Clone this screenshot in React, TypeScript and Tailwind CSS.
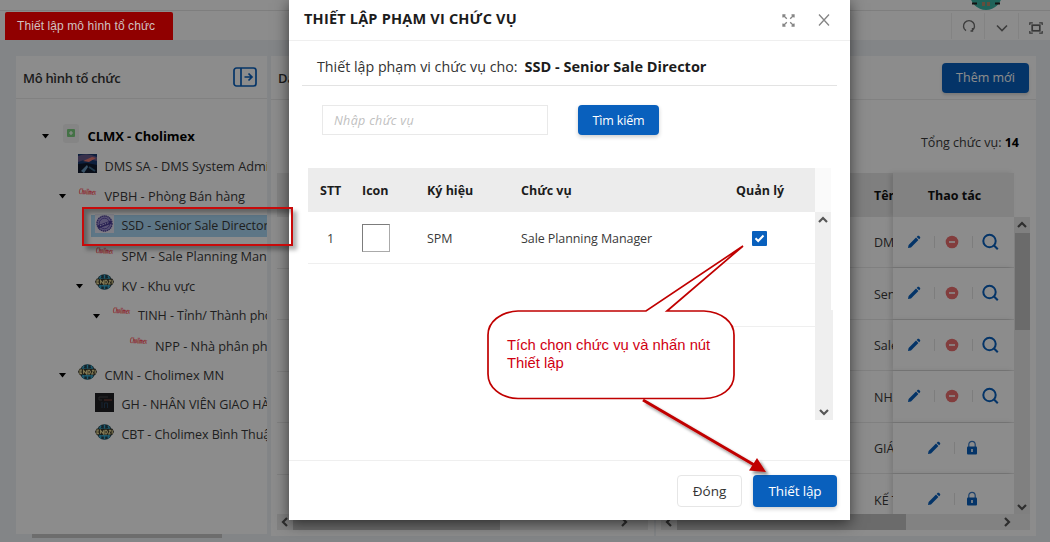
import type { ReactNode } from "react";

type Logo = "plus" | "photo" | "brand" | "stamp" | "globe" | "dark";
type TreeNode = { label: string; indent: string; logo: Logo; open?: boolean; selected?: boolean; text: string };

const regular = "text-[12.750px] tracking-[-0.020px] text-[#3a3a3a]";
const tight = "text-[12.500px] tracking-[-0.060px] text-[#3a3a3a]";

const tree: TreeNode[] = [
  { label: "CLMX - Cholimex", indent: "pl-[22px]", logo: "plus", open: true, text: "font-bold text-[13px] tracking-[-0.080px] text-black" },
  { label: "DMS SA - DMS System Admin", indent: "pl-[39px]", logo: "photo", text: regular },
  { label: "VPBH - Phòng Bán hàng", indent: "pl-[39px]", logo: "brand", open: true, text: regular },
  { label: "SSD - Senior Sale Director", indent: "pl-[56px]", logo: "stamp", selected: true, text: tight },
  { label: "SPM - Sale Planning Manager", indent: "pl-[56px]", logo: "brand", text: regular },
  { label: "KV - Khu vực", indent: "pl-[56px]", logo: "globe", open: true, text: regular },
  { label: "TINH - Tỉnh/ Thành phố", indent: "pl-[72.500px]", logo: "brand", open: true, text: tight },
  { label: "NPP - Nhà phân phối", indent: "pl-[89.500px]", logo: "brand", text: regular },
  { label: "CMN - Cholimex MN", indent: "pl-[39px]", logo: "globe", open: true, text: regular },
  { label: "GH - NHÂN VIÊN GIAO HÀNG", indent: "pl-[56px]", logo: "dark", text: tight },
  { label: "CBT - Cholimex Bình Thuận", indent: "pl-[56px]", logo: "globe", text: tight },
];

const positions = [
  { name: "DMS", locked: false },
  { name: "Senior", locked: false },
  { name: "Sale", locked: false },
  { name: "NHÂN", locked: false },
  { name: "GIÁM", locked: true },
  { name: "KẾ TOÁN", locked: true },
];

function NodeLogo({ kind }: { kind: Logo }) {
  if (kind === "plus")
    return (
      <svg width="19" height="19" viewBox="0 0 19 19">
        <rect x="2" width="16" height="19" rx="3" fill="#f2f2f2" />
        <rect x="6" y="5" width="8" height="8" rx="1" fill="#7ccf80" />
        <path d="M10 7v4M8 9h4" stroke="#fff" strokeWidth="1.2" />
      </svg>
    );
  if (kind === "photo")
    return (
      <svg width="19" height="19" viewBox="0 0 19 19">
        <rect width="19" height="19" fill="#183a70" />
        <path d="M0 2Q9-2 19 3V7Q9 4 0 8z" fill="#68598b" />
        <path d="M5 7l9-4 4 1-7 4z" fill="#e87972" />
        <path d="M0 10l9-1 10 2v8H0z" fill="#10182c" />
        <path d="M3 17l6-6 1 2-4 6z" fill="#6a98bd" />
        <path d="M11 13l6 4" stroke="#386587" strokeWidth="2" />
      </svg>
    );
  if (kind === "brand")
    return (
      <svg width="19" height="19" viewBox="0 0 19 19">
        <text x="1" y="10.500" fontSize="8.500" fontWeight="bold" fontStyle="italic" fontFamily="Liberation Serif, serif" textLength="17" lengthAdjust="spacingAndGlyphs" fill="#ff1c30" transform="rotate(3 9 9)">
          Cholimex
        </text>
      </svg>
    );
  if (kind === "stamp")
    return (
      <svg width="19" height="19" viewBox="0 0 19 19">
        <rect width="19" height="19" fill="#e8e8f4" />
        <circle cx="9.500" cy="9.500" r="7.500" fill="#a297d4" stroke="#4d3f98" strokeWidth="1.400" strokeDasharray="1.500 .5" />
        <circle cx="9.500" cy="9.500" r="5.300" fill="none" stroke="#5b4ba8" />
        <path d="M2.500 11.500l13.500-5 1 3-13.500 5z" fill="#4a3b98" />
        <path d="M5 11.800l9-3.300" stroke="#d5cef1" strokeWidth="1" strokeDasharray="1.500 1" />
      </svg>
    );
  if (kind === "globe")
    return (
      <svg width="19" height="19" viewBox="0 0 19 19">
        <circle cx="9.500" cy="9" r="7.800" fill="#23414d" />
        <path d="M4 5c3 1.500 8 1.500 11 0M4 14c3-2 8-2 11 0M9.500 1.500v15M6 2.500c-2 4-2 9 0 13M13 2.500c2 4 2 9 0 13" fill="none" stroke="#38a8cd" strokeWidth="1.400" />
        <path d="M1.500 5.800h16l1.500 3-1.500 3h-16L0 8.800z" fill="#343326" />
        <path d="M4 7.200H2v3.500h2M2 9h2M5.500 10.800V7.300l3 3.500V7.300M10 7.300h1.500l1 1.700-1 1.800H10zM13.800 7.300h1.800l-1.800 3.500h1.800M17.200 7.300v3.500" fill="none" stroke="#e6d795" strokeWidth="1.200" />
      </svg>
    );
  return (
    <svg width="19" height="19" viewBox="0 0 19 19">
      <rect width="19" height="19" fill="#202024" />
      <path d="M4 4h9M4 4v3h3" stroke="#48484b" fill="none" />
      <path d="M9 7h8" stroke="#8d493c" />
      <path d="M7 15V9M9.500 15v-5h3v5" stroke="#26415a" fill="none" />
    </svg>
  );
}

function Chevron({ dir, className = "" }: { dir: "up" | "down" | "left" | "right"; className?: string }) {
  const d = {
    up: "M4 10L8 6L12 10",
    down: "M4 6L8 10L12 6",
    left: "M10 4L6 8L10 12",
    right: "M6 4L10 8L6 12",
  }[dir];
  return (
    <svg width="16" height="16" viewBox="0 0 16 16" className={"shrink-0 " + className}>
      <path d={d} fill="none" stroke="#555" strokeWidth="2.200" />
    </svg>
  );
}

function Pencil() {
  return (
    <svg width="14" height="14" viewBox="0 0 14 14" className="shrink-0" fill="#0960bd">
      <path d="M1 13l.6-3L9 2.600l2.400 2.400L4 12.400z" />
      <path d="M9.700 1.900l.8-.8c.5-.5 1.200-.5 1.700 0l.7.700c.5.500.5 1.200 0 1.700l-.8.800z" />
    </svg>
  );
}

function Actions({ locked }: { locked: boolean }) {
  const divider = <span className="h-[12px] w-px shrink-0 bg-[#e4e4e4]" />;
  if (locked)
    return (
      <div className="flex h-full w-[121px] items-center pl-[34px]">
        <Pencil />
        <span className="w-[13px]" />
        {divider}
        <svg width="12" height="16" viewBox="0 0 12 16" className="ml-[11px]">
          <path d="M2.800 7V4.500a3.200 3.200 0 016.400 0V7" fill="none" stroke="#3979c3" strokeWidth="1.200" />
          <rect x="1" y="6.500" width="10" height="8" rx="1" fill="#0960bd" />
          <path d="M6 9v3" stroke="#fff" strokeWidth="1.600" />
        </svg>
      </div>
    );
  return (
    <div className="flex h-full w-[121px] items-center pl-[14px]">
      <Pencil />
      <span className="w-[13px]" />
      {divider}
      <svg width="14" height="14" viewBox="0 0 14 14" className="ml-[10px] shrink-0">
        <circle cx="7" cy="7" r="6.300" fill="#ed6f6f" />
        <path d="M4 7h6" stroke="#fff" strokeWidth="1.600" />
      </svg>
      <span className="w-[13px]" />
      {divider}
      <svg width="18" height="18" viewBox="0 0 18 18" className="ml-[8px] shrink-0" fill="none" stroke="#0960bd" strokeWidth="2">
        <circle cx="8.500" cy="8" r="6.200" />
        <path d="M12.800 12.300l4 4" />
      </svg>
    </div>
  );
}

function ToolCell({ children }: { children: ReactNode }) {
  return <div className="flex h-[26px] w-[33.500px] shrink-0 items-center justify-center border-l border-[#eee] pl-[2px]">{children}</div>;
}

function Tree() {
  return (
    <section className="flex h-[478px] w-[251px] shrink-0 flex-col bg-white">
      <header className="flex h-[43px] shrink-0 items-center justify-between border-b border-[#ececec] pl-[7px] pr-[10px]">
        <h2 className="pt-[3px] text-[13px] font-semibold tracking-[-0.300px] text-[#333]">Mô hình tổ chức</h2>
        <svg width="24" height="20" viewBox="0 0 24 20" fill="none" stroke="#0960bd" strokeWidth="1.700">
          <rect x="1" y="1" width="22" height="18" rx="2.500" />
          <path d="M8 1v18M11.500 10h7M15.500 6.500L19 10l-3.500 3.500" />
        </svg>
      </header>
      <div className="overflow-hidden pt-[22px]">
        {tree.map((n) => (
          <div key={n.label} className={"flex h-[29.880px] w-[251px] items-center " + n.indent}>
            <span className="flex w-[15px] shrink-0 justify-center pt-[2px]">
              {n.open && (
                <svg width="7" height="5" viewBox="0 0 7 5">
                  <path d="M0 0h7L3.500 4.500z" />
                </svg>
              )}
            </span>
            <div className={"ml-[4px] flex h-[22px] min-w-0 flex-1 items-center pl-[4px] " + (n.selected ? "bg-[#a9d8f5]" : "")}>
              <span className="mb-[5px] h-[19px] w-[19px] shrink-0">
                <NodeLogo kind={n.logo} />
              </span>
              <span className={"ml-[7.500px] whitespace-nowrap pt-[2px] " + n.text}>{n.label}</span>
            </div>
          </div>
        ))}
      </div>
    </section>
  );
}

function HiddenTable() {
  return (
    <section className="flex h-[480px] w-[383px] shrink-0 flex-col bg-white">
      <header className="flex h-[44px] shrink-0 items-center border-b border-[#ececec] pl-[7px] pt-[3px] text-[13px] font-semibold text-[#333]">Danh sách</header>
      <div className="mt-[73px] flex flex-col px-[6px]">
        <div className="h-[44px] bg-[#ededed]" />
        {positions.map((p, i) => (
          <div key={p.name} className={i < positions.length - 1 ? "h-[51.500px] border-b border-[#eaeaea]" : "h-[39.500px]"} />
        ))}
        <div className="flex h-[16px] w-[371px] items-center bg-[#ebebeb]">
          <Chevron dir="left" />
          <span className="h-full w-[207px] bg-[#c1c1c1]" />
          <Chevron dir="right" className="ml-[116px]" />
        </div>
      </div>
    </section>
  );
}

function PositionTable() {
  return (
    <section className="flex h-[480px] w-[380px] shrink-0 flex-col bg-white">
      <header className="flex h-[44px] shrink-0 items-center justify-end border-b border-[#ececec] pr-[7px]">
        <button className="h-[30px] w-[87px] rounded-[4px] bg-[#0960bd] pt-[2px] text-[12.500px] text-white shadow-[0_2px_3px_rgba(0,0,0,0.15)]">Thêm mới</button>
      </header>
      <p className="flex h-[73px] shrink-0 items-start justify-end pr-[17px] pt-[34px] text-[12.500px] text-[#3a3a3a]">
        Tổng chức vụ:&nbsp;<b className="text-black">14</b>
      </p>
      <div className="flex pl-[5px]">
        <div className="w-[353px]">
          <div className="flex h-[43.500px] items-center bg-[#e8e8e8] text-[12.500px] font-bold text-[#111]">
            <div className="w-[232px] overflow-hidden whitespace-nowrap pl-[213px] pt-[3px]">Tên</div>
            <div className="flex h-full w-[121px] items-center justify-center bg-[#ededed] pl-[2px] pt-[3px] shadow-[-3px_0_5px_rgba(0,0,0,0.12)]">Thao tác</div>
          </div>
          <div className="h-[297px] overflow-hidden">
            {positions.map((p) => (
              <div key={p.name} className="flex h-[51.500px] border-b border-[#eaeaea]">
                <div className="flex w-[232px] items-center overflow-hidden whitespace-nowrap pl-[213px] pt-[4px] text-[12.500px] text-[#3a3a3a]">{p.name}</div>
                <div className="w-[121px] bg-white shadow-[-3px_0_5px_rgba(0,0,0,0.12)]">
                  <Actions locked={p.locked} />
                </div>
              </div>
            ))}
          </div>
        </div>
        <div className="mt-[43.500px] flex h-[297px] w-[16px] flex-col items-center bg-[#eaeaea]">
          <Chevron dir="up" />
          <span className="h-[97px] w-[15px] bg-[#c4c4c4]" />
          <Chevron dir="down" className="-mb-px mt-auto" />
        </div>
      </div>
      <div className="ml-[5px] flex h-[16px] w-[369px] items-center bg-[#ededed]">
        <Chevron dir="left" />
        <span className="h-full w-[229px] bg-[#c4c4c4]" />
        <Chevron dir="right" className="ml-[93px]" />
      </div>
    </section>
  );
}

function Modal() {
  return (
    <div className="absolute left-[289px] top-0 flex h-[520px] w-[561px] flex-col bg-white shadow-[0_3px_14px_rgba(0,0,0,0.6)]">
      <header className="flex h-[41px] shrink-0 items-center justify-between border-b border-[#efefef] pl-[15px] pr-[20px]">
        <h1 className="whitespace-nowrap pb-[2px] text-[14.500px] font-bold tracking-[0.200px] text-[#1c1c1c]">THIẾT LẬP PHẠM VI CHỨC VỤ</h1>
        <div className="flex items-center gap-[23px]">
          <svg width="13" height="13" viewBox="0 0 13 13" fill="none" stroke="#858585" strokeWidth="1.300">
            <path d="M1 3.500V1h2.500M9.500 1H12v2.500M12 9.500V12H9.500M3.500 12H1V9.500M1 1l3.800 3.800M12 1L8.200 4.800M12 12L8.200 8.200M1 12l3.800-3.800" />
          </svg>
          <svg width="12" height="12" viewBox="0 0 12 12" fill="none" stroke="#858585" strokeWidth="1.300">
            <path d="M1 .5l10 11M11 .5l-10 11" />
          </svg>
        </div>
      </header>
      <div className="mx-[13px] flex h-[45px] shrink-0 items-center whitespace-nowrap border-b border-[#e3e3e3] pl-[15px] pt-[8px] text-[14.250px] text-[#333]">
        Thiết lập phạm vi chức vụ cho:<b className="ml-[7px] text-[14.500px] text-[#1c1c1c]">SSD - Senior Sale Director</b>
      </div>
      <div className="flex shrink-0 pl-[33px] pt-[18.500px]">
        <input
          placeholder="Nhập chức vụ"
          className="h-[30px] w-[226px] border border-[#e9e9e9] px-[11px] pt-[2px] text-[12.500px] italic tracking-[0.320px] placeholder:text-[#bfbfbf]"
        />
        <button className="ml-[30px] h-[30px] w-[81px] rounded-[4px] bg-[#0960bd] pt-[3px] text-[12.500px] tracking-[-0.150px] text-white shadow-[0_2px_4px_rgba(0,0,0,0.2)]">Tìm kiếm</button>
      </div>
      <div className="ml-[19px] mt-[33.500px] flex h-[252px] shrink-0">
        <div className="w-[507px] text-[12.500px] tracking-[-0.080px] text-[#3a3a3a]">
          <div className="grid h-[43.500px] grid-cols-[54px_66px_93px_215px_1fr] items-center bg-[#ececec] pt-[4px] font-bold tracking-normal text-[#1c1c1c]">
            <span className="pl-[12px]">STT</span>
            <span>Icon</span>
            <span className="-ml-px">Ký hiệu</span>
            <span>Chức vụ</span>
            <span>Quản lý</span>
          </div>
          <div className="grid h-[52px] grid-cols-[54px_66px_92px_216px_1fr] items-center border-b border-[#efefef]">
            <span className="pl-[19px] pt-[5px]">1</span>
            <span className="mt-px h-[28px] w-[28px] border border-[#7c7c7c] border-b-[#aaa] border-r-[#aaa]" />
            <span className="-ml-px pt-[5px]">SPM</span>
            <span className="pl-px pt-[5px]">Sale Planning Manager</span>
            <span className="ml-[16px] mt-[2px] flex h-[15px] w-[15px] items-center justify-center rounded-[1px] bg-[#0960bd]">
              <svg width="11" height="9" viewBox="0 0 11 9">
                <path d="M1.500 4.200L4.200 7L9.500 1.500" fill="none" stroke="#fff" strokeWidth="2" />
              </svg>
            </span>
          </div>
          <div className="ml-[400px] h-[63px] border-b border-[#efefef]" />
        </div>
        <div className="flex w-[18px] flex-col">
          <div className="h-[43.500px] w-[16px] bg-[#fafafa]" />
          <div className="h-[98px] w-[16px] bg-[#efefef]">
            <Chevron dir="up" />
          </div>
          <div className="flex flex-1 flex-col justify-end bg-[#efefef]">
            <Chevron dir="down" className="ml-px" />
          </div>
        </div>
      </div>
      <footer className="mt-[40px] flex flex-1 items-start justify-end gap-[11px] border-t border-[#efefef] pr-[13px] pt-[14px] text-[13.500px]">
        <button className="h-[32px] w-[65px] rounded-[4px] border border-[#e6e6e6] bg-white text-[#333]">Đóng</button>
        <button className="h-[32px] w-[84px] rounded-[4px] bg-[#0960bd] tracking-[-0.150px] text-white shadow-[0_2px_4px_rgba(0,0,0,0.2)]">Thiết lập</button>
      </footer>
    </div>
  );
}

export default function App() {
  return (
    <div className="relative flex h-[542px] w-[1050px] flex-col overflow-hidden bg-[#eef2f6] font-['Open_Sans','Noto_Sans',sans-serif]">
      <div className="flex h-[11px] shrink-0 justify-end border-b border-[#e6e6e6] bg-white pr-[48px]">
        <div className="flex h-[11px] w-[32px] items-end overflow-hidden">
          <svg width="32" height="32" viewBox="0 0 32 32" className="-mb-[3px] shrink-0">
            <circle cx="16" cy="12" r="16" fill="#3bb5a5" />
            <path d="M2 21.500h5M25 21.500h5" stroke="#222" strokeWidth="2" />
            <path d="M12 20h3v4h-3zM17 20h3v4h-3z" fill="#b28f70" />
          </svg>
        </div>
      </div>
      <div className="flex h-[29px] shrink-0 items-center justify-end bg-white">
        <div className="-mr-px flex">
          <ToolCell>
            <svg width="14" height="14" viewBox="0 0 14 14" fill="none" stroke="#707070" strokeWidth="1.400">
              <path d="M4 11.700A5.500 5.500 0 1110 11.700M10.500 9v3h-2" />
            </svg>
          </ToolCell>
          <ToolCell>
            <svg width="12" height="8" viewBox="0 0 12 8" fill="none" stroke="#707070" strokeWidth="1.600" className="mt-[4px]">
              <path d="M1 1.500l5 5 5-5" />
            </svg>
          </ToolCell>
          <ToolCell>
            <svg width="14" height="12" viewBox="0 0 14 12" fill="none" stroke="#666" strokeWidth="1.200" className="mt-[4px]">
              <path d="M.8 3V.8h3M10.200.8h3V3M13.200 9v2.200h-3M3.800 11.200h-3V9" />
              <rect x="3.200" y="3.200" width="7.600" height="5.600" strokeWidth="1.700" />
            </svg>
          </ToolCell>
        </div>
      </div>
      <main className="flex pl-[16px] pt-[16px]">
        <Tree />
        <div className="w-[4px] shrink-0" />
        <HiddenTable />
        <div className="w-[2px] shrink-0" />
        <PositionTable />
      </main>
      <div className="absolute left-[32px] top-[534px] h-[4px] w-[190px] bg-[#c6c6c6]" />
      <div className="absolute inset-0 bg-black/45" />
      <div className="absolute left-[5px] top-[12px] flex h-[28px] w-[168px] items-center whitespace-nowrap rounded-t-[2px] bg-[#900000] pl-[12px] font-['Liberation_Sans',sans-serif] text-[12px] tracking-[0.080px] text-[#d0c0c0]">
        Thiết lập mô hình tổ chức
      </div>
      <Modal />
      <div className="absolute left-[82px] top-[207px] h-[39px] w-[211px] border-2 border-[#c80a0a] shadow-[4px_4px_4px_rgba(0,0,0,0.3),inset_4px_4px_4px_rgba(0,0,0,0.3)]" />
      <svg width="1050" height="542" className="pointer-events-none absolute inset-0">
        <defs>
          <filter id="soft" x="-20%" y="-20%" width="150%" height="150%">
            <feDropShadow dx="3" dy="3" stdDeviation="1.800" floodOpacity="0.45" />
          </filter>
        </defs>
        <path d="M518 311H646L743 246L667 311H704C722 312 734 322 734 335V375C734 389 721 398 704 398.500H518C500 398 488 387 488 374V335C488 322 500 312 518 311Z" fill="#fff" stroke="#c00000" strokeWidth="1.700" />
        <g filter="url(#soft)" fill="#c00000">
          <path d="M643 400L756 466" stroke="#c00000" strokeWidth="3" />
          <path d="M766 472L749 470.500L757 458Z" />
        </g>
      </svg>
      <p className="absolute left-[507px] top-[336px] w-[215px] whitespace-nowrap font-['Liberation_Sans',sans-serif] text-[14.800px] leading-[18px] text-[#d00012]">
        Tích chọn chức vụ và nhấn nút
        <br />
        Thiết lập
      </p>
    </div>
  );
}
